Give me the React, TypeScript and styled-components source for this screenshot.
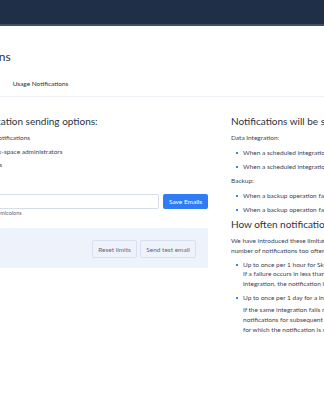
import React from 'react';
import styled, { createGlobalStyle } from 'styled-components';

const GlobalStyle = createGlobalStyle`
  html, body {
    margin: 0;
    padding: 0;
    background: #ffffff;
    overflow: hidden;
  }
  body {
    font-family: Lato, "Open Sans", sans-serif;
    color: #3d4554;
  }
`;

const TopBar = styled.header`
  height: 24px;
  background: #1f2f48;
  border-bottom: 2px solid #434e60;
`;

const Page = styled.div`
  margin-left: -57px;
  width: 640px;
`;

const PageHead = styled.div`
  padding-top: 24px;
`;

const Title = styled.h1`
  margin: 0;
  font-size: 12px;
  line-height: 14px;
  font-weight: 400;
  color: #2b3240;
`;

const Tabs = styled.nav`
  display: flex;
  gap: 16px;
  margin-top: 13px;
`;

const Tab = styled.span<{ active?: boolean }>`
  padding: 2px 0 7px;
  font-size: 6.5px;
  line-height: 10px;
  color: ${({ active }) => (active ? '#2b3240' : '#4a5262')};
`;

const Divider = styled.div`
  height: 1px;
  background: #eceff4;
  margin-left: -200px;
`;

const Columns = styled.div`
  display: grid;
  grid-template-columns: 237px 320px;
  column-gap: 23px;
  padding: 18px 0 0 28px;
`;

const Heading = styled.h2<{ spaced?: boolean }>`
  margin: ${({ spaced }) => (spaced ? '3px 0 0' : '0')};
  font-size: 10px;
  line-height: 12px;
  font-weight: 400;
  color: #2b3240;
  white-space: nowrap;
`;

const OptionList = styled.div`
  display: flex;
  flex-direction: column;
  gap: 3.5px;
  margin-top: 6px;
`;

const Option = styled.div`
  font-size: 6.5px;
  line-height: 10px;
  color: #3d4554;
  white-space: nowrap;
`;

const EmailRow = styled.div`
  display: flex;
  gap: 4px;
  margin-top: 24px;
`;

const EmailInput = styled.input`
  flex: 1;
  height: 15px;
  box-sizing: border-box;
  border: 1px solid #d6dce8;
  border-radius: 2px;
  padding: 0 4px;
  font-family: inherit;
  font-size: 6.5px;
  outline: none;
`;

const SaveButton = styled.button`
  width: 45px;
  height: 15px;
  border: none;
  border-radius: 2px;
  background: #2f7cf6;
  color: #ffffff;
  font-family: inherit;
  font-size: 6.5px;
  padding: 0;
`;

const Hint = styled.div`
  margin-top: 1px;
  font-size: 5.5px;
  line-height: 7px;
  color: #5c6475;
  white-space: nowrap;
`;

const ActionPanel = styled.div`
  display: flex;
  justify-content: flex-end;
  gap: 3px;
  margin-top: 11px;
  margin-left: -40px;
  padding: 12px 12px 10px;
  background: #eef2fb;
`;

const GhostButton = styled.button<{ w: number }>`
  width: ${({ w }) => w}px;
  height: 18px;
  padding: 0;
  border: 1px solid #d9e0f1;
  border-radius: 2px;
  background: #eef2fb;
  color: #5d6b86;
  font-family: inherit;
  font-size: 6.5px;
`;

const InfoColumn = styled.section`
  white-space: nowrap;
`;

const SubLabel = styled.div<{ gap: number }>`
  margin-top: ${({ gap }) => gap}px;
  font-size: 6.5px;
  line-height: 10px;
  color: #3d4554;
`;

const Bullets = styled.ul`
  list-style: none;
  margin: 0;
  padding: 0 0 0 5px;
`;

const Bullet = styled.li<{ gap?: number }>`
  position: relative;
  margin-top: ${({ gap = 4.5 }) => gap}px;
  padding-left: 7px;
  font-size: 6.5px;
  line-height: 10px;
  color: #3d4554;
  &::before {
    content: '';
    position: absolute;
    left: 0;
    top: 4px;
    width: 2px;
    height: 2px;
    background: #3b82f6;
  }
`;

const Para = styled.p`
  margin: 6px 0 0;
  font-size: 6.5px;
  line-height: 10px;
  color: #3d4554;
`;

const Note = styled.div<{ gap: number }>`
  margin-top: ${({ gap }) => gap}px;
  line-height: 10.3px;
`;

const App: React.FC = () => {
  return (
    <>
      <GlobalStyle />
      <TopBar />
      <Page>
        <PageHead>
          <Title>Notifications</Title>
          <Tabs>
            <Tab>Email Notifications</Tab>
            <Tab active>Usage Notifications</Tab>
          </Tabs>
        </PageHead>
        <Divider />
        <Columns>
          <section>
            <Heading>Notification sending options:</Heading>
            <OptionList>
              <Option>Receive notifications</Option>
              <Option>To all work-space administrators</Option>
              <Option>Add emails</Option>
            </OptionList>
            <EmailRow>
              <EmailInput type="text" />
              <SaveButton>Save Emails</SaveButton>
            </EmailRow>
            <Hint>Split with semicolons</Hint>
            <ActionPanel>
              <GhostButton w={45}>Reset limits</GhostButton>
              <GhostButton w={56}>Send test email</GhostButton>
            </ActionPanel>
          </section>
          <InfoColumn>
            <Heading>Notifications will be sent when:</Heading>
            <SubLabel gap={6}>Data Integration:</SubLabel>
            <Bullets>
              <Bullet>When a scheduled integration fails</Bullet>
              <Bullet>When a scheduled integration completes with errors</Bullet>
            </Bullets>
            <SubLabel gap={4}>Backup:</SubLabel>
            <Bullets>
              <Bullet>When a backup operation fails</Bullet>
              <Bullet>When a backup operation fails to start</Bullet>
            </Bullets>
            <Heading spaced>How often notifications are sent</Heading>
            <Para>
              We have introduced these limitations to avoid sending a large
              <br />
              number of notifications too often.
            </Para>
            <Bullets>
              <Bullet gap={3.5}>
                Up to once per 1 hour for Skyvia integration failures.
                <Note gap={-1}>
                  If a failure occurs in less than an hour after the previous
                  notification for this
                  <br />
                  integration, the notification is not sent.
                </Note>
              </Bullet>
              <Bullet gap={4}>
                Up to once per 1 day for a integration that fails repeatedly.
                <Note gap={1.5}>
                  If the same integration fails multiple times in a row, Skyvia
                  does not send
                  <br />
                  notifications for subsequent times until a day passes from the
                  moment
                  <br />
                  for which the notification is sent.
                </Note>
              </Bullet>
            </Bullets>
          </InfoColumn>
        </Columns>
      </Page>
    </>
  );
};

export default App;
